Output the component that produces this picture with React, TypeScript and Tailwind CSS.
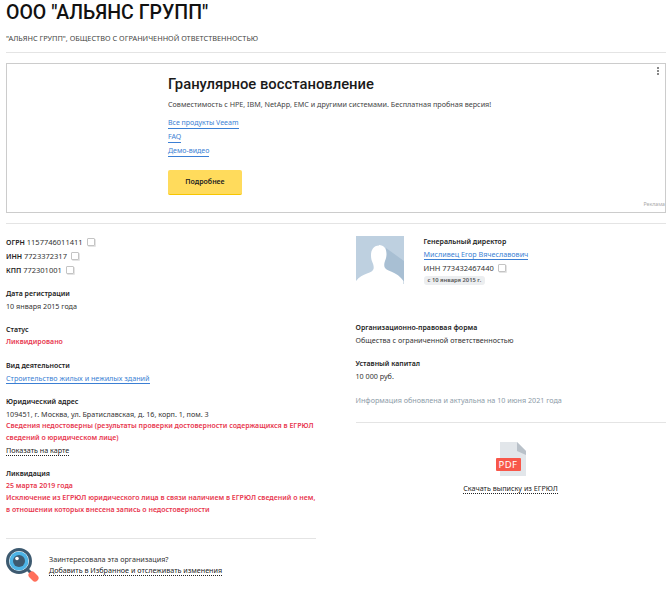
import React from 'react';

const Copy = () => (
  <span className="relative inline-block align-[-1px] w-[8px] h-[8px] ml-[2px] border border-[#c4c4c4] bg-white rounded-[1px] shadow-[1px_1px_0_#e4e4e4]" />
);

const Label = ({ children }: { children: React.ReactNode }) => (
  <div className="font-semibold text-[7px] text-[#222] leading-[12px] whitespace-nowrap">{children}</div>
);

const Line = ({ className = '', children }: { className?: string; children: React.ReactNode }) => (
  <div className={`leading-[12px] whitespace-nowrap ${className}`}>{children}</div>
);

const Red = ({ children }: { children: React.ReactNode }) => (
  <div className="leading-[12px] whitespace-nowrap font-semibold text-[7px] text-[#e8384f]">{children}</div>
);

const Avatar = () => (
  <svg width="48" height="48" viewBox="0 0 48 48" className="shrink-0">
    <rect width="48" height="48" fill="#bed0e0" />
    <path d="M30 12 L48 25 V48 H24 Z" fill="#a8bfd3" />
    <path d="M23 9c5 0 7.500 3.500 7.500 9 0 3-.7 5-1.500 7-.8 2-1 4-.5 6 .5 2 3 3 6.500 4.500 5 2 9.500 5 12.500 9.500v3H0v-3c3-4 7-6 11-7.500 4-1.500 6-2.500 6.500-4.500.5-2 0-4-1-6.500-.8-2-1.500-4-1.500-7 0-5.500 2.500-10 8-10z" fill="#fff" />
  </svg>
);

const Magnifier = () => (
  <svg width="33" height="34" viewBox="0 0 33 34" className="shrink-0">
    <path d="M21 21 L26 26" stroke="#3d5a70" strokeWidth="3" />
    <path d="M26 27 L29 30" stroke="#ff6f5b" strokeWidth="7" strokeLinecap="round" />
    <circle cx="13" cy="13" r="11.500" fill="#fff" stroke="#3d5a70" strokeWidth="3" />
    <circle cx="13" cy="13" r="9.500" fill="#4db4e6" />
    <circle cx="13" cy="13" r="6" fill="#3d5a70" />
    <circle cx="11" cy="10.500" r="1.800" fill="#fff" />
  </svg>
);

const PdfIcon = () => (
  <div className="relative w-[30px] h-[34px] mx-auto">
    <svg width="30" height="34" viewBox="0 0 30 34" className="absolute left-0 top-0">
      <path d="M4 0 H21 L30 9 V34 H4 Z" fill="#e2e6ea" />
      <path d="M21 0 L30 9 V13 L21 9 Z" fill="#b9c1c9" />
    </svg>
    <div className="absolute left-0 top-[16px] w-[25px] h-[13px] bg-[#f8574a] rounded-[1px] text-white text-[9.500px] leading-[13px] text-center font-normal tracking-[0.500px]">
      PDF
    </div>
  </div>
);

export default function App() {
  return (
    <div className="w-[671px] h-[590px] overflow-hidden bg-white px-[6px] font-['Noto_Sans',sans-serif] text-[7.200px] text-[#333]">
      <h1 className="font-['Roboto',sans-serif] font-medium text-[19.500px] leading-[26px] text-[#111]">
        ООО "АЛЬЯНС ГРУПП"
      </h1>
      <div className="mt-[6px] leading-[12px] text-[7.350px] text-[#444]">
        "АЛЬЯНС ГРУПП", ОБЩЕСТВО С ОГРАНИЧЕННОЙ ОТВЕТСТВЕННОСТЬЮ
      </div>
      <div className="mt-[8px] h-px bg-[#e4e4e4] w-[660px]" />

      {/* Ad */}
      <div className="relative mt-[10px] w-[660px] h-[150px] border border-[#ccc] pl-[161px] pt-[10px]">
        <div className="font-['Roboto',sans-serif] font-medium text-[14.800px] leading-[20px] text-[#1a1a1a]">Гранулярное восстановление</div>
        <div className="mt-[4px] leading-[12px] text-[#444]">
          Совместимость с HPE, IBM, NetApp, EMC и другими системами. Бесплатная пробная версия!
        </div>
        <div className="mt-[8px] flex flex-col items-start text-[7px] text-[#3b7fd4] leading-[10px] gap-[3px]">
          <a className="border-b border-[#3b7fd4]">Все продукты Veeam</a>
          <a className="border-b border-[#3b7fd4]">FAQ</a>
          <a className="border-b border-[#3b7fd4]">Демо-видео</a>
        </div>
        <div className="mt-[13px] w-[74px] h-[25px] bg-[#ffdb5c] border-b border-[#f7c600] rounded-[2px] flex items-center justify-center text-[7px] text-[#222] font-semibold">
          Подробнее
        </div>
        <div className="absolute right-[6px] top-[3px] flex flex-col gap-[1px]">
          <span className="w-[2px] h-[2px] bg-[#888]" />
          <span className="w-[2px] h-[2px] bg-[#888]" />
          <span className="w-[2px] h-[2px] bg-[#888]" />
        </div>
        <div className="absolute right-0 bottom-[4px] text-[5.200px] leading-[8px] text-[#aaa]">Реклама</div>
      </div>
      <div className="mt-[10px] h-px bg-[#e4e4e4] w-[660px]" />

      <div className="flex mt-[12px]">
        {/* Left column */}
        <div className="w-[310px] shrink-0">
          <div className="flex flex-col gap-[2px] text-[7.500px]">
            <Line className="h-[12px]"><span className="font-semibold text-[7px] text-[#222]">ОГРН</span> 1157746011411 <Copy /></Line>
            <Line className="h-[12px]"><span className="font-semibold text-[7px] text-[#222]">ИНН</span> 7723372317 <Copy /></Line>
            <Line className="h-[12px]"><span className="font-semibold text-[7px] text-[#222]">КПП</span> 772301001 <Copy /></Line>
          </div>
          <div className="mt-[12px]">
            <Label>Дата регистрации</Label>
            <Line>10 января 2015 года</Line>
          </div>
          <div className="mt-[12px]">
            <Label>Статус</Label>
            <Red>Ликвидировано</Red>
          </div>
          <div className="mt-[12px]">
            <Label>Вид деятельности</Label>
            <Line><a className="text-[#3b7fd4] border-b border-[#3b7fd4]">Строительство жилых и нежилых зданий</a></Line>
          </div>
          <div className="mt-[12px]">
            <Label>Юридический адрес</Label>
            <Line>109451, г. Москва, ул. Братиславская, д. 16, корп. 1, пом. 3</Line>
            <Red>Сведения недостоверны (результаты проверки достоверности содержащихся в ЕГРЮЛ</Red>
            <Red>сведений о юридическом лице)</Red>
            <Line><a className="text-[#222] border-b border-dotted border-[#222]">Показать на карте</a></Line>
          </div>
          <div className="mt-[12px]">
            <Label>Ликвидация</Label>
            <Red>25 марта 2019 года</Red>
            <Red>Исключение из ЕГРЮЛ юридического лица в связи наличием в ЕГРЮЛ сведений о нем,</Red>
            <Red>в отношении которых внесена запись о недостоверности</Red>
          </div>
          <div className="mt-[22px] h-px bg-[#e4e4e4]" />
          <div className="flex items-center mt-[9px]">
            <Magnifier />
            <div className="ml-[10px] leading-[10px]">
              <div>Заинтересовала эта организация?</div>
              <a className="inline-block mt-[1px] text-[#222] border-b border-dotted border-[#222]">Добавить в Избранное и отслеживать изменения</a>
            </div>
          </div>
        </div>

        {/* Divider */}
        <div className="w-px h-[344px] bg-[#e4e4e4] ml-[20px] mr-[19.500px]" />

        {/* Right column */}
        <div className="w-[310px] shrink-0">
          <div className="flex">
            <Avatar />
            <div className="ml-[20px]">
              <Label>Генеральный директор</Label>
              <Line><a className="text-[#3b7fd4] border-b border-[#3b7fd4]">Мисливец Егор Вячеславович</a></Line>
              <Line className="mt-[2px] h-[12px] text-[7.500px]">ИНН 773432467440 <Copy /></Line>
              <span className="inline-block mt-[2px] px-[4px] bg-[#eceef0] rounded-[3px] text-[5.800px] leading-[9px] text-[#555] font-semibold">с 10 января 2015 г.</span>
            </div>
          </div>
          <div className="mt-[37px]">
            <Label>Организационно-правовая форма</Label>
            <Line>Общества с ограниченной ответственностью</Line>
          </div>
          <div className="mt-[12px]">
            <Label>Уставный капитал</Label>
            <Line>10 000 руб.</Line>
          </div>
          <div className="mt-[12px] leading-[12px] text-[#8c9ba8]">Информация обновлена и актуальна на 10 июня 2021 года</div>
          <div className="mt-[16px] h-px bg-[#e4e4e4]" />
          <div className="mt-[19px] text-center">
            <PdfIcon />
            <a className="inline-block mt-[7px] text-[#222] leading-[10px] border-b border-dotted border-[#222]">Скачать выписку из ЕГРЮЛ</a>
          </div>
        </div>
      </div>
    </div>
  );
}
